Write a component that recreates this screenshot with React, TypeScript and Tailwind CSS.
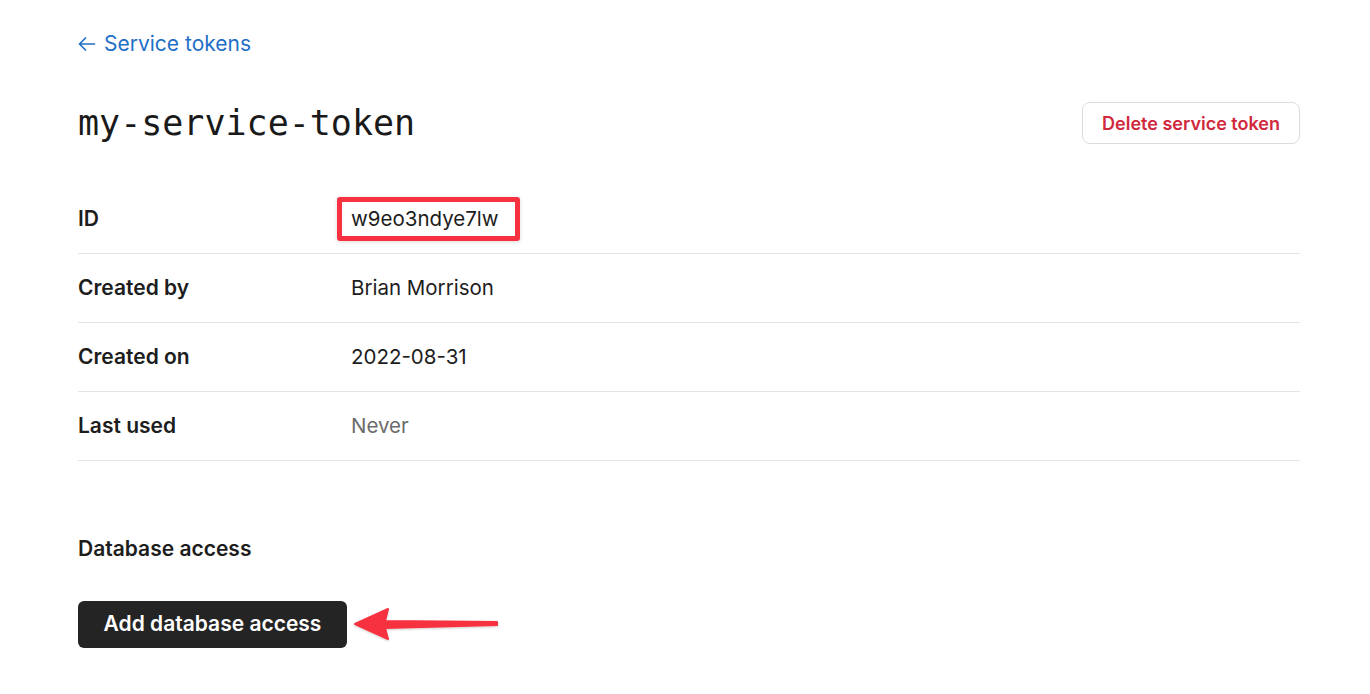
const rows = [
  { label: "ID", value: "w9eo3ndye7lw", highlight: true },
  { label: "Created by", value: "Brian Morrison" },
  { label: "Created on", value: "2022-08-31" },
  { label: "Last used", value: "Never", muted: true },
];

export default function App() {
  return (
    <div
      className="min-h-screen bg-white text-[#1d1d1d]"
      style={{ fontFamily: "Inter, 'Noto Sans', sans-serif" }}
    >
      <div className="ml-[78px] w-[1222px] pt-[30px]">
        {/* Back link */}
        <a href="#" className="flex items-center gap-[8px] text-[21px] leading-[28px] text-[#1f6fc6]">
          <svg width="18" height="14" viewBox="0 0 18 14" fill="none" stroke="currentColor" strokeWidth="1.7" strokeLinecap="round" strokeLinejoin="round">
            <path d="M16.5 7H1.5M7.5 1L1.5 7L7.5 13" />
          </svg>
          <span>Service tokens</span>
        </a>

        {/* Header */}
        <div className="flex items-center justify-between mt-[40px]">
          <h1
            className="text-[35px] leading-[50px] text-[#1a1a1a]"
            style={{ fontFamily: "'DejaVu Sans Mono', monospace" }}
          >
            my-service-token
          </h1>
          <button className="h-[42px] px-[19px] rounded-[8px] border border-[#dcdcdc] bg-white text-[18px] font-semibold text-[#d0283c]">
            Delete service token
          </button>
        </div>

        {/* Details */}
        <div className="mt-[37px]">
          {rows.map((row) => (
            <div key={row.label} className="flex items-center h-[69px] border-b border-[#e4e4e4]">
              <div className="w-[273px] text-[21px] font-semibold">{row.label}</div>
              <div className={`relative text-[20.5px] leading-[30px] ${row.muted ? "text-[#6b6b6b]" : "text-[#1d1d1d]"}`}>
                {row.value}
                {row.highlight && (
                  <div className="absolute -left-[14px] -right-[21px] -top-[7px] -bottom-[7px] border-[5px] border-[#f7313f] rounded-[3px] shadow-[0_1px_4px_rgba(0,0,0,0.15)]" />
                )}
              </div>
            </div>
          ))}
        </div>

        {/* Database access */}
        <div className="mt-[72px] text-[21px] font-semibold">Database access</div>
        <div className="flex items-center mt-[36px]">
          <button className="h-[47px] w-[269px] rounded-[6px] bg-[#242424] text-white text-[21px] font-semibold">
            Add database access
          </button>
          <svg width="160" height="40" viewBox="0 0 160 40" className="ml-[4px]">
            <defs>
              <filter id="sh" x="-10%" y="-30%" width="120%" height="160%">
                <feDropShadow dx="0" dy="1" stdDeviation="1.2" floodOpacity="0.2" />
              </filter>
            </defs>
            <path
              d="M4 20 L37 5 L34 17 L146 18 L146 21 L34 24 L37 35 Z"
              fill="#f7313f"
              strokeLinejoin="round"
              stroke="#f7313f"
              strokeWidth="2"
              filter="url(#sh)"
            />
          </svg>
        </div>
      </div>
    </div>
  );
}
